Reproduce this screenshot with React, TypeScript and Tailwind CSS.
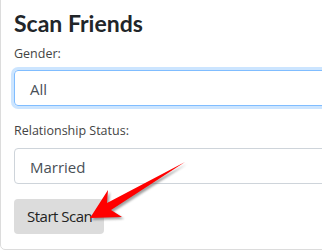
export default function App() {
  return (
    <div className="relative w-[322px] h-[251px] overflow-hidden bg-white font-['Open_Sans',sans-serif]">
      <div className="w-[420px] mt-[-10px] border border-[#dcdcdc] rounded-[5px] pl-[13px] pr-4 pt-[18px] pb-[15px]">
        <h2 className="font-['Lato',sans-serif] text-[23px] leading-[28px] font-bold text-[#212529]">Scan Friends</h2>
        <div className="mt-[8px]">
          <label className="block text-[12.5px] leading-[18px] text-[#444]">Gender:</label>
          <div className="mt-[7px] h-[36px] flex items-center pl-[15px] pt-[2px] border border-[#80bdff] rounded-[4px] shadow-[0_0_0_3px_rgba(0,123,255,0.2)] text-[15px] text-[#495057]">
            All
          </div>
        </div>
        <div className="mt-[16px]">
          <label className="block text-[12.5px] leading-[18px] text-[#444]">Relationship Status:</label>
          <div className="mt-[8px] h-[36px] flex items-center pl-[15px] pt-[2px] border border-[#ced4da] rounded-[4px] text-[15px] text-[#495057]">
            Married
          </div>
        </div>
        <button className="mt-[15px] w-[90px] h-[35px] rounded-[4px] bg-[#dcdcdc] text-[15px] tracking-[-0.5px] text-[#222] text-left pl-[13px]">
          Start Scan
        </button>
      </div>
      <svg className="absolute left-0 top-0 pointer-events-none" width="322" height="251" viewBox="0 0 322 251">
        <defs>
          <filter id="sh" x="-20%" y="-20%" width="140%" height="140%">
            <feGaussianBlur stdDeviation="0.8" />
          </filter>
        </defs>
        <polygon
          points="90,218 108,190 107,203 185,162 111,210 122,217"
          fill="#555"
          opacity="0.55"
          transform="translate(2,2)"
          filter="url(#sh)"
        />
        <polygon points="90,218 108,190 107,203 185,162 111,210 122,217" fill="#ff0000" />
      </svg>
    </div>
  )
}
